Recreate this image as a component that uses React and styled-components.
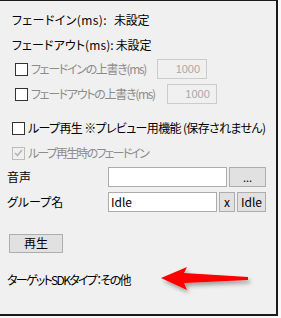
import React from 'react'
import styled, { createGlobalStyle } from 'styled-components'

const GlobalStyle = createGlobalStyle`
    body {
        margin: 0;
        background: #f8f8f8;
        font-family: "Noto Sans CJK JP", "Liberation Sans", sans-serif;
        font-size: 12px;
        font-feature-settings: "palt" 1;
        color: #000;
    }
`

const Panel = styled.div`
    position: relative;
    box-sizing: border-box;
    width: 278px;
    height: 316px;
    background: #f0f0f0;
    border-top: 1px solid #1a1a1a;
    border-right: 2px solid #1a1a1a;
    border-bottom: 2px solid #1a1a1a;
    padding-top: 7px;
    display: flex;
    flex-direction: column;
`

const Row = styled.div`
    display: flex;
    align-items: center;
    height: ${p => p.h || 20}px;
    margin-top: ${p => p.mt || 0}px;
    padding-left: ${p => p.pl || 0}px;
    white-space: nowrap;
    line-height: 14px;
    gap: ${p => p.gap || 0}px;
`

const Text = styled.span`
    color: ${p => (p.dim ? '#8c8c8c' : '#000')};
    letter-spacing: ${p => p.ls ?? -0.2}px;
`

const Box = styled.span`
    box-sizing: border-box;
    width: 13px;
    height: 13px;
    flex: none;
    border: 1px solid ${p => (p.disabled ? '#bcbcbc' : '#333')};
    background: ${p => (p.disabled ? '#f0f0f0' : '#fff')};
    margin-right: 3px;
    display: flex;
    align-items: center;
    justify-content: center;
`

const NumInput = styled.div`
    box-sizing: border-box;
    width: 50px;
    height: 20px;
    margin-left: ${p => p.ml}px;
    border: 1px solid #cccccc;
    background: #f0f0f0;
    color: #a8a8a8;
    text-align: right;
    padding-right: 6px;
    line-height: 18px;
    font-family: "Liberation Sans", sans-serif;
    font-size: 11px;
`

const Label = styled.span`
    width: 101px;
    flex: none;
`

const Field = styled.div`
    box-sizing: border-box;
    width: ${p => p.w}px;
    height: 20px;
    border: 1px solid #ababab;
    background: #fff;
    padding-left: 2px;
    line-height: 18px;
`

const Button = styled.div`
    box-sizing: border-box;
    width: ${p => p.w}px;
    height: ${p => p.hh || 20}px;
    margin-left: ${p => p.ml || 0}px;
    border: 1px solid #adadad;
    background: #e1e1e1;
    display: flex;
    align-items: center;
    justify-content: center;
    font-size: ${p => p.fs || 12}px;
`

const Arrow = styled.svg`
    position: absolute;
    left: 152px;
    top: 258px;
`

function Check({ checked, disabled }) {
    return (
        <Box disabled={disabled}>
            {checked && (
                <svg width="9" height="8" viewBox="0 0 9 8">
                    <path d="M1 4 L3.5 6.5 L8 1" fill="none" stroke="#b5b5b5" strokeWidth="1.6" />
                </svg>
            )}
        </Box>
    )
}

export default function App() {
    return (
        <>
            <GlobalStyle />
            <Panel>
                <Row h={24} pl={12} gap={7}>
                    <Text ls={0.4}>フェードイン(ms):</Text>
                    <Text>未設定</Text>
                </Row>
                <Row h={24} mt={1} pl={12} gap={2}>
                    <Text ls={0.1}>フェードアウト(ms):</Text>
                    <Text>未設定</Text>
                </Row>
                <Row mt={2} pl={15}>
                    <Check />
                    <Text dim ls={-1.3}>フェードインの上書き(ms)</Text>
                    <NumInput ml={11}>1000</NumInput>
                </Row>
                <Row mt={5} pl={15}>
                    <Check />
                    <Text dim ls={-1.3}>フェードアウトの上書き(ms)</Text>
                    <NumInput ml={12}>1000</NumInput>
                </Row>
                <Row mt={14} pl={12}>
                    <Check />
                    <Text ls={-0.65}>ループ再生 ※プレビュー用機能 (保存されません)</Text>
                </Row>
                <Row mt={5} pl={12}>
                    <Check checked disabled />
                    <Text dim ls={-1.8}>ループ再生時のフェードイン</Text>
                </Row>
                <Row mt={4} pl={7}>
                    <Label>音声</Label>
                    <Field w={119} />
                    <Button w={37} ml={2} fs={11}>...</Button>
                </Row>
                <Row mt={5} pl={7}>
                    <Label>グループ名</Label>
                    <Field w={109}>Idle</Field>
                    <Button w={16} ml={2}>x</Button>
                    <Button w={29} ml={2}>Idle</Button>
                </Row>
                <Row mt={21} pl={9}>
                    <Button w={54} hh={19}>再生</Button>
                </Row>
                <Row mt={17} pl={7}>
                    <Text ls={-1.7}>ターゲットSDKタイプ：その他</Text>
                </Row>
                <Arrow width="104" height="40" viewBox="0 0 104 40">
                    <defs>
                        <filter id="sh" x="-20%" y="-40%" width="140%" height="180%">
                            <feDropShadow dx="2" dy="3" stdDeviation="2" floodColor="#000" floodOpacity="0.35" />
                        </filter>
                    </defs>
                    <polygon
                        points="9,19 35,8 32,14 96,18 96,21 32,24 35,31"
                        fill="#ff0000"
                        filter="url(#sh)"
                    />
                </Arrow>
            </Panel>
        </>
    )
}
